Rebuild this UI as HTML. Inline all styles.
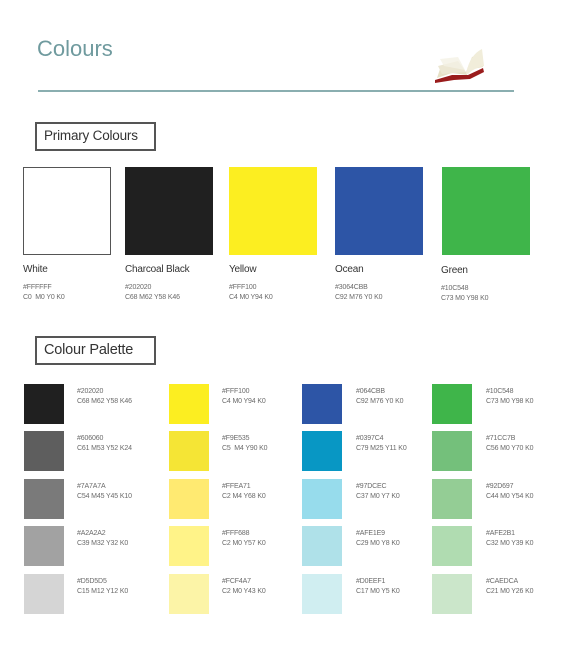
<!DOCTYPE html>
<html><head><style>
*{margin:0;padding:0;box-sizing:border-box}
body{width:561px;height:650px;background:#fff;position:relative;font-family:"Liberation Sans",sans-serif;overflow:hidden}
.a{position:absolute}
.t{font-size:7px;color:#6a6a6a;line-height:10px;white-space:nowrap;letter-spacing:-0.15px}
.n{font-size:10px;color:#333;white-space:nowrap;letter-spacing:-0.2px}
.box{border:2px solid #555;font-size:13.5px;color:#333;padding-left:7px;line-height:24px;letter-spacing:-0.2px}
.sw{width:40px;height:40px}
</style></head><body>
<div class="a" style="left:37px;top:36px;font-size:22px;color:#6f9a9e">Colours</div>
<svg class="a" style="left:432px;top:44px" width="54" height="40" viewBox="0 0 54 40">
<path d="M3 36 L20 31 L36 31 L51 24 L52 28 L38 35 L22 36 L3 39Z" fill="#9a1c1c"/>
<path d="M5 34 L20 29 L35 31 L36 26 L51 23 L50 10 L40 13 L34 28 L22 24 L8 25Z" fill="#e6e0c6"/>
<path d="M34 30 C36 20 40 10 50 5 L52 22 C44 24 40 26 36 30Z" fill="#f1edda"/>
<path d="M6 22 L26 17 L34 28 L10 30Z" fill="#ece7d3"/>
<path d="M8 15 L26 13 L33 26 L12 22Z" fill="#f4f1e5" opacity=".8"/>
</svg>
<div class="a" style="left:38px;top:90px;width:476px;height:2px;background:#8aaeb0"></div>
<div class="a box" style="left:35px;top:122px;width:121px;height:29px">Primary Colours</div>
<div class="a" style="left:23px;top:167px;width:88px;height:88px;border:1px solid #555;background:#fff"></div>
<div class="a" style="left:125px;top:167px;width:88px;height:88px;background:#202020"></div>
<div class="a" style="left:229px;top:167px;width:88px;height:88px;background:#fcee21"></div>
<div class="a" style="left:335px;top:167px;width:88px;height:88px;background:#2d55a6"></div>
<div class="a" style="left:442px;top:167px;width:88px;height:88px;background:#3fb54a"></div>
<div class="a n" style="left:23px;top:264px">White</div>
<div class="a n" style="left:125px;top:264px">Charcoal Black</div>
<div class="a n" style="left:229px;top:264px">Yellow</div>
<div class="a n" style="left:335px;top:264px">Ocean</div>
<div class="a n" style="left:441px;top:265px">Green</div>
<div class="a t" style="left:23px;top:283px">#FFFFFF<br>C0&nbsp; M0 Y0 K0</div>
<div class="a t" style="left:125px;top:283px">#202020<br>C68 M62 Y58 K46</div>
<div class="a t" style="left:229px;top:283px">#FFF100<br>C4 M0 Y94 K0</div>
<div class="a t" style="left:335px;top:283px">#3064CBB<br>C92 M76 Y0 K0</div>
<div class="a t" style="left:441px;top:284px">#10C548<br>C73 M0 Y98 K0</div>
<div class="a box" style="left:35px;top:336px;width:121px;height:29px;font-size:14.5px">Colour Palette</div>

<div class="a sw" style="left:24px;top:384px;background:#202020"></div>
<div class="a sw" style="left:24px;top:431px;background:#5e5e5e"></div>
<div class="a sw" style="left:24px;top:479px;background:#7a7a7a"></div>
<div class="a sw" style="left:24px;top:526px;background:#a2a2a2"></div>
<div class="a sw" style="left:24px;top:574px;background:#d5d5d5"></div>
<div class="a t" style="left:77px;top:387px">#202020<br>C68 M62 Y58 K46</div>
<div class="a t" style="left:77px;top:434px">#606060<br>C61 M53 Y52 K24</div>
<div class="a t" style="left:77px;top:482px">#7A7A7A<br>C54 M45 Y45 K10</div>
<div class="a t" style="left:77px;top:529px">#A2A2A2<br>C39 M32 Y32 K0</div>
<div class="a t" style="left:77px;top:577px">#D5D5D5<br>C15 M12 Y12 K0</div>

<div class="a sw" style="left:169px;top:384px;background:#fcee21"></div>
<div class="a sw" style="left:169px;top:431px;background:#f5e535"></div>
<div class="a sw" style="left:169px;top:479px;background:#ffea71"></div>
<div class="a sw" style="left:169px;top:526px;background:#fff388"></div>
<div class="a sw" style="left:169px;top:574px;background:#fcf4a7"></div>
<div class="a t" style="left:222px;top:387px">#FFF100<br>C4 M0 Y94 K0</div>
<div class="a t" style="left:222px;top:434px">#F9E535<br>C5&nbsp; M4 Y90 K0</div>
<div class="a t" style="left:222px;top:482px">#FFEA71<br>C2 M4 Y68 K0</div>
<div class="a t" style="left:222px;top:529px">#FFF688<br>C2 M0 Y57 K0</div>
<div class="a t" style="left:222px;top:577px">#FCF4A7<br>C2 M0 Y43 K0</div>

<div class="a sw" style="left:302px;top:384px;background:#2d55a6"></div>
<div class="a sw" style="left:302px;top:431px;background:#0897c4"></div>
<div class="a sw" style="left:302px;top:479px;background:#97dcec"></div>
<div class="a sw" style="left:302px;top:526px;background:#afe1e9"></div>
<div class="a sw" style="left:302px;top:574px;background:#d0eef1"></div>
<div class="a t" style="left:356px;top:387px">#064CBB<br>C92 M76 Y0 K0</div>
<div class="a t" style="left:356px;top:434px">#0397C4<br>C79 M25 Y11 K0</div>
<div class="a t" style="left:356px;top:482px">#97DCEC<br>C37 M0 Y7 K0</div>
<div class="a t" style="left:356px;top:529px">#AFE1E9<br>C29 M0 Y8 K0</div>
<div class="a t" style="left:356px;top:577px">#D0EEF1<br>C17 M0 Y5 K0</div>

<div class="a sw" style="left:432px;top:384px;background:#3fb54a"></div>
<div class="a sw" style="left:432px;top:431px;background:#74c07b"></div>
<div class="a sw" style="left:432px;top:479px;background:#94cd95"></div>
<div class="a sw" style="left:432px;top:526px;background:#b0dcb1"></div>
<div class="a sw" style="left:432px;top:574px;background:#cbe6ca"></div>
<div class="a t" style="left:486px;top:387px">#10C548<br>C73 M0 Y98 K0</div>
<div class="a t" style="left:486px;top:434px">#71CC7B<br>C56 M0 Y70 K0</div>
<div class="a t" style="left:486px;top:482px">#92D697<br>C44 M0 Y54 K0</div>
<div class="a t" style="left:486px;top:529px">#AFE2B1<br>C32 M0 Y39 K0</div>
<div class="a t" style="left:486px;top:577px">#CAEDCA<br>C21 M0 Y26 K0</div>
</body></html>
